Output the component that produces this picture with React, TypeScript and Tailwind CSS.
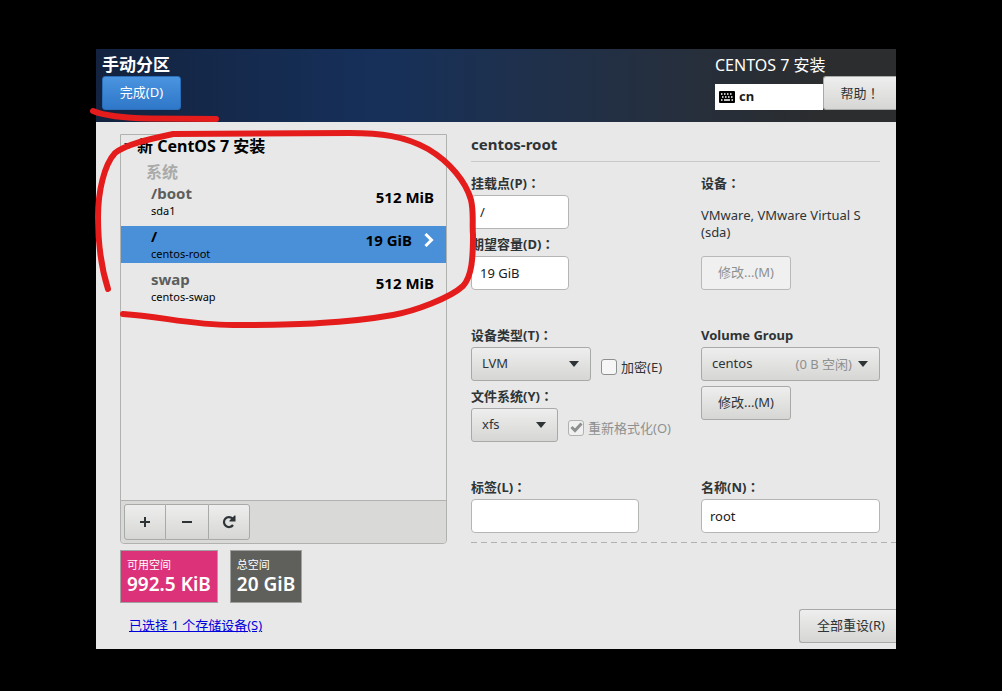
import type { ReactNode } from 'react';

const raised = 'border border-[#a8aaa8] rounded-[3px] bg-linear-to-b from-[#eeeeee] to-[#d6d6d4] text-[#2e3436]';
const textBox = 'block h-[34px] border border-[#b4b6b4] rounded-[4px] bg-white px-2 text-[13px] text-[#1a1a1a] outline-none';

function Caret() {
  return (
    <svg className="absolute right-3 top-3.5 pointer-events-none" width="10" height="6" viewBox="0 0 10 6">
      <path d="M0 0H10L5 6Z" fill="#2e3436" />
    </svg>
  );
}

// the TC face centres full-width punctuation in its cell
function Mark({ children }: { children: ReactNode }) {
  return <span className="font-['Noto_Sans_CJK_TC',sans-serif]">{children}</span>;
}

function Label({ htmlFor, children }: { htmlFor: string; children: ReactNode }) {
  return (
    <label htmlFor={htmlFor} className="block h-6 text-[13px] leading-6 font-bold whitespace-nowrap">
      {children}
    </label>
  );
}

const mounts = [
  { path: '/boot', device: 'sda1', size: '512 MiB', active: false },
  { path: '/', device: 'centos-root', size: '19 GiB', active: true },
  { path: 'swap', device: 'centos-swap', size: '512 MiB', active: false },
];

function Header() {
  return (
    <header className="flex justify-between pl-1.5 pt-[5px] pb-3 text-white bg-linear-to-r from-[#13233f] from-0% via-[#16305a] via-35% to-[#2b2d2f] to-90%">
      <div>
        <h1 className="text-[17px] leading-[22px] font-bold">手动分区</h1>
        <button className="block h-[34px] w-[79px] rounded-[3px] border border-[#2a6db8] bg-linear-to-b from-[#4a94e0] to-[#2f77c8] text-[13px]">
          完成(D)
        </button>
      </div>
      <div className="w-[181px]">
        <div className="text-[16px] leading-[22px]">CENTOS 7 安装</div>
        <div className="flex items-end">
          <div className="flex h-[26px] flex-1 items-center gap-1 bg-white px-1 text-[13px] font-bold text-[#1a1a1a]">
            <svg width="16" height="12" viewBox="0 0 16 12">
              <rect width="16" height="12" rx="1" fill="#000" />
              <path
                d="M2 3H3.500M5 3H6.500M8 3H9.500M11 3H12.500M3 6H4.500M6 6H7.500M9 6H10.500M12 6H13.500M2 9H3.500M5 9H11M12.500 9H14"
                stroke="#fff"
                strokeWidth="1.5"
              />
            </svg>
            cn
          </div>
          <button className={`${raised} h-[34px] w-[73px] rounded-r-none border-r-0 text-[13px] whitespace-nowrap`}>
            帮助<Mark>！</Mark>
          </button>
        </div>
      </div>
    </header>
  );
}

function MountList() {
  return (
    <section className="flex flex-1 flex-col rounded-b-[4px] border border-[#b0b2b0]">
      <div className="flex h-[22px] items-center gap-[3px] pl-[3px] text-[16px] leading-5 font-bold text-black">
        <svg width="10" height="6" viewBox="0 0 10 6">
          <path d="M0 0H10L5 6Z" fill="#2e3436" />
        </svg>
        新 CentOS 7 安装
      </div>
      <div className="mt-1 pl-[25px] text-[16px] leading-[22px] font-bold text-[#a9abaa]">系统</div>
      <ul className="flex flex-1 flex-col gap-1.5">
        {mounts.map((m) => (
          <li
            key={m.path}
            className={`flex h-[37px] justify-between pr-3 pl-[30px] text-[15px] font-bold ${m.active ? 'bg-[#4a90d9]' : ''}`}
          >
            <div>
              <div className={`leading-5 ${m.active ? 'text-black' : 'text-[#5c5e5d]'}`}>{m.path}</div>
              <div className="text-[11px] leading-4 font-normal text-black">{m.device}</div>
            </div>
            <div className="flex h-7 items-center gap-3 text-black">
              {m.size}
              {m.active && (
                <svg width="10" height="14" viewBox="0 0 10 14">
                  <path d="M1.500 1L7.500 7L1.500 13" fill="none" stroke="#fff" strokeWidth="3" />
                </svg>
              )}
            </div>
          </li>
        ))}
      </ul>
      <div className="flex rounded-b-[4px] border-t border-[#b0b2b0] bg-[#d9dad8] p-[3px]">
        <button aria-label="+" className={`${raised} flex h-9 w-[42px] items-center justify-center rounded-r-none`}>
          <svg width="10" height="10" viewBox="0 0 10 10">
            <path d="M5 0V10M0 5H10" stroke="#2e3436" strokeWidth="2" />
          </svg>
        </button>
        <button aria-label="-" className={`${raised} flex h-9 w-[42px] items-center justify-center rounded-none border-x-0`}>
          <svg width="10" height="10" viewBox="0 0 10 10">
            <path d="M0 5H10" stroke="#2e3436" strokeWidth="2" />
          </svg>
        </button>
        <button aria-label="reload" className={`${raised} flex h-9 w-[42px] items-center justify-center rounded-l-none`}>
          <svg width="14" height="14" viewBox="0 0 14 14">
            <path d="M11 10A5 5 0 1 1 10.500 3.500" fill="none" stroke="#2e3436" strokeWidth="2.200" />
            <path d="M13.500 0.500V6.500H7.500V5.500L12.500 0.500Z" fill="#2e3436" />
          </svg>
        </button>
      </div>
    </section>
  );
}

function Space({ label, value, tone }: { label: string; value: string; tone: string }) {
  return (
    <div className={`h-[53px] border border-[#a0a2a0] px-1.5 pt-1.5 text-white whitespace-nowrap ${tone}`}>
      <div className="text-[11px] leading-4">{label}</div>
      <div className="text-[19px] leading-[22px] font-semibold">{value}</div>
    </div>
  );
}

function Details() {
  return (
    <section className="min-w-0 flex-1 pr-4">
      <h2 className="border-b border-[#c8cac8] pb-[7px] text-[15px] leading-5 font-bold">centos-root</h2>
      <div className="mt-[9px] grid grid-cols-[230px_1fr] gap-y-[33px]">
        <div>
          <Label htmlFor="mount">挂载点(P)<Mark>：</Mark></Label>
          <input id="mount" defaultValue="/" className={`${textBox} mb-[3px] w-[98px]`} />
          <Label htmlFor="capacity">期望容量(D)<Mark>：</Mark></Label>
          <input id="capacity" defaultValue="19 GiB" className={`${textBox} w-[98px]`} />
        </div>
        <div>
          <div className="h-6 text-[13px] leading-6 font-bold">设备<Mark>：</Mark></div>
          <p className="mt-3 text-[13px] leading-[17px]">
            VMware, VMware Virtual S
            <br />
            (sda)
          </p>
          <button disabled className="mt-[15px] h-[34px] w-[90px] rounded-[3px] border border-[#b8bab8] bg-[#f0f0f0] text-[13px] text-[#8e9090]">
            修改...(M)
          </button>
        </div>

        <div>
          <Label htmlFor="type">设备类型(T)<Mark>：</Mark></Label>
          <div className="mb-[3px] flex items-center gap-2.5">
            <div className="relative">
              <select id="type" className={`${raised} block h-[34px] w-[120px] appearance-none px-2.5 text-[13px]`}>
                <option>LVM</option>
              </select>
              <Caret />
            </div>
            <label className="flex items-center gap-1 pt-1.5 text-[13px] leading-5">
              <input type="checkbox" className="h-4 w-4 appearance-none rounded-[3px] border border-[#8e908e] bg-[#f6f6f6]" />
              加密(E)
            </label>
          </div>
          <Label htmlFor="fs">文件系统(Y)<Mark>：</Mark></Label>
          <div className="flex items-center gap-2.5">
            <div className="relative">
              <select id="fs" className={`${raised} block h-[34px] w-[87px] appearance-none px-2.5 text-[13px]`}>
                <option>xfs</option>
              </select>
              <Caret />
            </div>
            <label className="relative flex items-center gap-1 pt-1.5 text-[13px] leading-5 text-[#8e9090]">
              <input type="checkbox" defaultChecked disabled className="h-4 w-4 appearance-none rounded-[3px] border border-[#b0b2b0] bg-[#f0f0f0]" />
              <svg className="absolute left-0.5 top-2.5" width="13" height="11" viewBox="0 0 13 11">
                <path d="M1.500 5L5 8.500L11.500 1.500" fill="none" stroke="#8e9090" strokeWidth="3" />
              </svg>
              重新格式化(O)
            </label>
          </div>
        </div>
        <div>
          <Label htmlFor="vg">Volume Group</Label>
          <div className="relative">
            <select id="vg" className={`${raised} block h-[34px] w-full appearance-none px-2.5 text-[13px]`}>
              <option>centos</option>
            </select>
            <span className="absolute right-7 top-[7px] text-[13px] leading-5 text-[#8e9090] pointer-events-none">(0 B 空闲)</span>
            <Caret />
          </div>
          <button className={`${raised} mt-[5px] h-[34px] w-[90px] text-[13px]`}>修改...(M)</button>
        </div>

        <div>
          <Label htmlFor="label">标签(L)<Mark>：</Mark></Label>
          <input id="label" className={`${textBox} w-[168px]`} />
        </div>
        <div>
          <Label htmlFor="name">名称(N)<Mark>：</Mark></Label>
          <input id="name" defaultValue="root" className={`${textBox} w-full`} />
        </div>
      </div>
      <div className="-mr-4 mt-[9px] h-px bg-[repeating-linear-gradient(90deg,#b0b2b0_0_6px,transparent_6px_10px)]" />
    </section>
  );
}

export default function App() {
  return (
    <div className="relative flex min-h-screen flex-col overflow-hidden bg-black pt-[49px] pr-[106px] pb-[42px] pl-24 font-['Noto_Sans','Noto_Sans_CJK_SC',sans-serif]">
      <div className="flex flex-1 flex-col bg-[#e8e8e8] text-[#2e3436]">
        <Header />
        <main className="flex flex-1 gap-6 pt-3 pl-6">
          <div className="flex w-[327px] shrink-0 flex-col">
            <MountList />
            <div className="mt-1.5 flex gap-3">
              <Space label="可用空间" value="992.5 KiB" tone="bg-[#db3279]" />
              <Space label="总空间" value="20 GiB" tone="bg-[#5f605c]" />
            </div>
          </div>
          <Details />
        </main>
        <footer className="my-1.5 flex items-center justify-between pl-[33px]">
          <a href="#storage" className="text-[13px] text-[#0000dd] underline">
            已选择 1 个存储设备(S)
          </a>
          <button className={`${raised} h-[34px] w-[97px] rounded-r-none border-r-0 pl-1.5 text-[13px]`}>全部重设(R)</button>
        </footer>
      </div>

      {/* red pen marks */}
      <svg className="pointer-events-none absolute left-0 top-0" width="500" height="340" viewBox="0 0 500 340" fill="none" stroke="#e41c1c" strokeWidth="6" strokeLinecap="round" strokeLinejoin="round">
        <path d="M93 111C105 116 125 118 150 118.500L216 119" />
        <path d="M108 289C102 270 98 245 98 217C98 192 104 165 115 153C126 144 150 139 173 134L350 133C380 133 405 136 428 149C450 162 466 182 471 200C474 212 472 225 473 235C473 258 472 276 463 286C450 298 415 311 393 315C370 319 340 322 320 323C290 325 260 325 233 325C190 325 160 316 123 314" />
      </svg>
    </div>
  );
}
